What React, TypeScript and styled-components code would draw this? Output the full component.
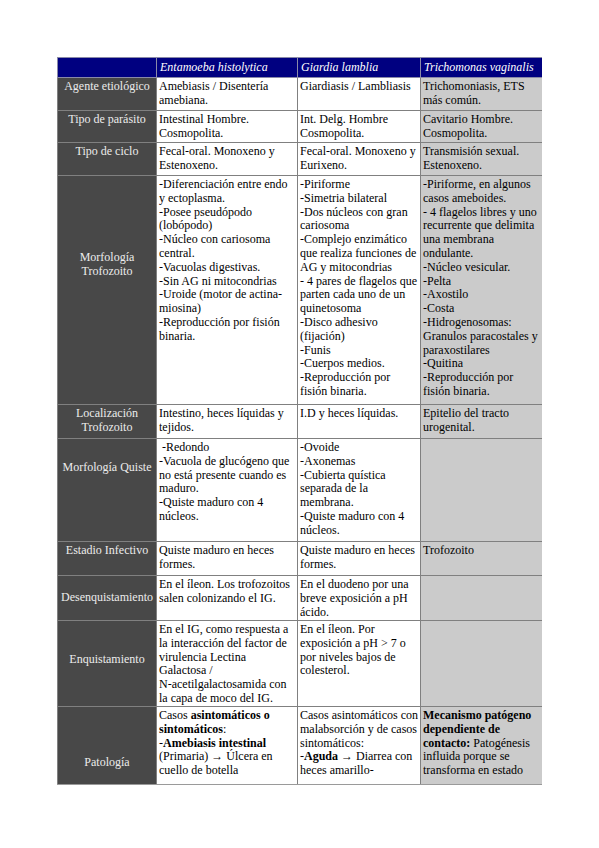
import React from 'react';
import styled, {createGlobalStyle} from 'styled-components';

const GlobalStyle = createGlobalStyle`
    html, body {
        margin: 0;
        padding: 0;
        background: #ffffff;
    }
    body {
        font-family: "Liberation Serif", "Times New Roman", serif;
    }
`;

const Page = styled.div`
    padding: 57px 0 0 57px;
`;

const Clip = styled.div`
    width: 485px;
    height: 727px;
    overflow: hidden;
    border-bottom: 1px solid #9a9a9a;
`;

const Table = styled.table`
    width: 485px;
    table-layout: fixed;
    border-collapse: collapse;
    font-family: "Liberation Serif", "Times New Roman", serif;
    font-size: 12px;
    line-height: 13.8px;
`;

const Row = styled.tr<{ $h: number }>`
    height: ${p => p.$h}px;
`;

const HeadCell = styled.th`
    background: #000080;
    color: #ffffff;
    font-family: "Liberation Serif", "Times New Roman", serif;
    font-size: 12px;
    line-height: 13.8px;
    font-style: italic;
    font-weight: normal;
    text-align: left;
    vertical-align: middle;
    padding: 0 3px;
    border: 1px solid #8a8aa8;
    white-space: nowrap;
`;

const Label = styled.th<{ $top: number }>`
    background: #484848;
    color: #ececec;
    font-family: "Liberation Serif", "Times New Roman", serif;
    font-size: 12px;
    line-height: 13.8px;
    font-weight: normal;
    text-align: center;
    vertical-align: top;
    padding: ${p => p.$top}px 2px 0;
    border: 1px solid #808080;
    white-space: nowrap;
`;

const Cell = styled.td<{ $shade?: boolean }>`
    background: ${p => (p.$shade ? '#cbcbcb' : '#ffffff')};
    color: #000000;
    font-family: "Liberation Serif", "Times New Roman", serif;
    font-size: 12px;
    line-height: 13.8px;
    vertical-align: top;
    padding: 2px 2px 0;
    border: 1px solid #808080;
    white-space: pre;
`;

const Bold = styled.b`
    font-weight: bold;
`;

// "**x**" marks bold runs inside a line
const Line = ({text}: { text: string }) => {
    const parts = text.split('**');
    return <>{parts.map((p, i) => (i % 2 ? <Bold key={i}>{p}</Bold> : <React.Fragment key={i}>{p}</React.Fragment>))}</>;
};

const Lines = ({lines}: { lines: string[] }) => (
    <>
        {lines.map((l, i) => (
            <React.Fragment key={i}>
                {i > 0 && <br/>}
                <Line text={l}/>
            </React.Fragment>
        ))}
    </>
);

interface RowData {
    label: string[];
    top: number;
    height: number;
    cells: [string[], string[], string[]];
}

const rows: RowData[] = [
    {
        label: ['Agente etiológico'], top: 2, height: 33,
        cells: [['Amebiasis / Disentería', 'amebiana.'], ['Giardiasis / Lambliasis'], ['Trichomoniasis, ETS', 'más común.']],
    },
    {
        label: ['Tipo de parásito'], top: 2, height: 32,
        cells: [['Intestinal Hombre.', 'Cosmopolita.'], ['Int. Delg. Hombre', 'Cosmopolita.'], ['Cavitario Hombre.', 'Cosmopolita.']],
    },
    {
        label: ['Tipo de ciclo'], top: 2, height: 33,
        cells: [['Fecal-oral. Monoxeno y', 'Estenoxeno.'], ['Fecal-oral. Monoxeno y', 'Eurixeno.'], ['Transmisión sexual.', 'Estenoxeno.']],
    },
    {
        label: ['Morfología', 'Trofozoito'], top: 75, height: 229,
        cells: [
            ['-Diferenciación entre endo', 'y ectoplasma.', '-Posee pseudópodo', '(lobópodo)', '-Núcleo con cariosoma', 'central.',
                '-Vacuolas digestivas.', '-Sin AG ni mitocondrias', '-Uroide (motor de actina-', 'miosina)', '-Reproducción por fisión', 'binaria.'],
            ['-Piriforme', '-Simetria bilateral', '-Dos núcleos con gran', 'cariosoma', '-Complejo enzimático', 'que realiza funciones de',
                'AG y mitocondrias', '- 4 pares de flagelos que', 'parten cada uno de un', 'quinetosoma', '-Disco adhesivo', '(fijación)',
                '-Funis', '-Cuerpos medios.', '-Reproducción por', 'fisión binaria.'],
            ['-Piriforme, en algunos', 'casos ameboides.', '- 4 flagelos libres y uno', 'recurrente que delimita', 'una membrana', 'ondulante.',
                '-Núcleo vesicular.', '-Pelta', '-Axostilo', '-Costa', '-Hidrogenosomas:', 'Granulos paracostales y', 'paraxostilares',
                '-Quitina', '-Reproducción por', 'fisión binaria.'],
        ],
    },
    {
        label: ['Localización', 'Trofozoito'], top: 2, height: 34,
        cells: [['Intestino, heces líquidas y', 'tejidos.'], ['I.D y heces líquidas.'], ['Epitelio del tracto', 'urogenital.']],
    },
    {
        label: ['Morfología Quiste'], top: 22, height: 103,
        cells: [
            [' -Redondo', '-Vacuola de glucógeno que', 'no está presente cuando es', 'maduro.', '-Quiste maduro con 4', 'núcleos.'],
            ['-Ovoide', '-Axonemas', '-Cubierta quística', 'separada de la', 'membrana.', '-Quiste maduro con 4', 'núcleos.'],
            [],
        ],
    },
    {
        label: ['Estadio Infectivo'], top: 2, height: 34,
        cells: [['Quiste maduro en heces', 'formes.'], ['Quiste maduro en heces', 'formes.'], ['Trofozoito']],
    },
    {
        label: ['Desenquistamiento'], top: 15, height: 45,
        cells: [['En el íleon. Los trofozoitos', 'salen colonizando el IG.'], ['En el duodeno por una', 'breve exposición a pH', 'ácido.'], []],
    },
    {
        label: ['Enquistamiento'], top: 32, height: 86,
        cells: [
            ['En el IG, como respuesta a', 'la interacción del factor de', 'virulencia Lectina', 'Galactosa /', 'N-acetilgalactosamida con', 'la capa de moco del IG.'],
            ['En el íleon. Por', 'exposición a pH > 7 o', 'por niveles bajos de', 'colesterol.'],
            [],
        ],
    },
    {
        label: ['Patología'], top: 49, height: 112,
        cells: [
            ['Casos **asintomáticos o**', '**sintomáticos**:', '-**Amebiasis intestinal**', '(Primaria) → Úlcera en', 'cuello de botella'],
            ['Casos asintomáticos con', 'malabsorción y de casos', 'sintomáticos:', '-**Aguda** → Diarrea con', 'heces amarillo-'],
            ['**Mecanismo patógeno**', '**dependiente de**', '**contacto:** Patogénesis', 'influida porque se', 'transforma en estado'],
        ],
    },
];

export default function App() {
    return <>
        <GlobalStyle/>
        <Page>
            <Clip>
                <Table>
                    <colgroup>
                        <col style={{width: 99}}/>
                        <col style={{width: 141}}/>
                        <col style={{width: 123}}/>
                        <col style={{width: 122}}/>
                    </colgroup>
                    <thead>
                    <Row $h={20}>
                        <HeadCell/>
                        <HeadCell>Entamoeba histolytica</HeadCell>
                        <HeadCell>Giardia lamblia</HeadCell>
                        <HeadCell>Trichomonas vaginalis</HeadCell>
                    </Row>
                    </thead>
                    <tbody>
                    {rows.map((r, i) => (
                        <Row key={i} $h={r.height}>
                            <Label $top={r.top}><Lines lines={r.label}/></Label>
                            <Cell><Lines lines={r.cells[0]}/></Cell>
                            <Cell><Lines lines={r.cells[1]}/></Cell>
                            <Cell $shade><Lines lines={r.cells[2]}/></Cell>
                        </Row>
                    ))}
                    </tbody>
                </Table>
            </Clip>
        </Page>
    </>;
}
